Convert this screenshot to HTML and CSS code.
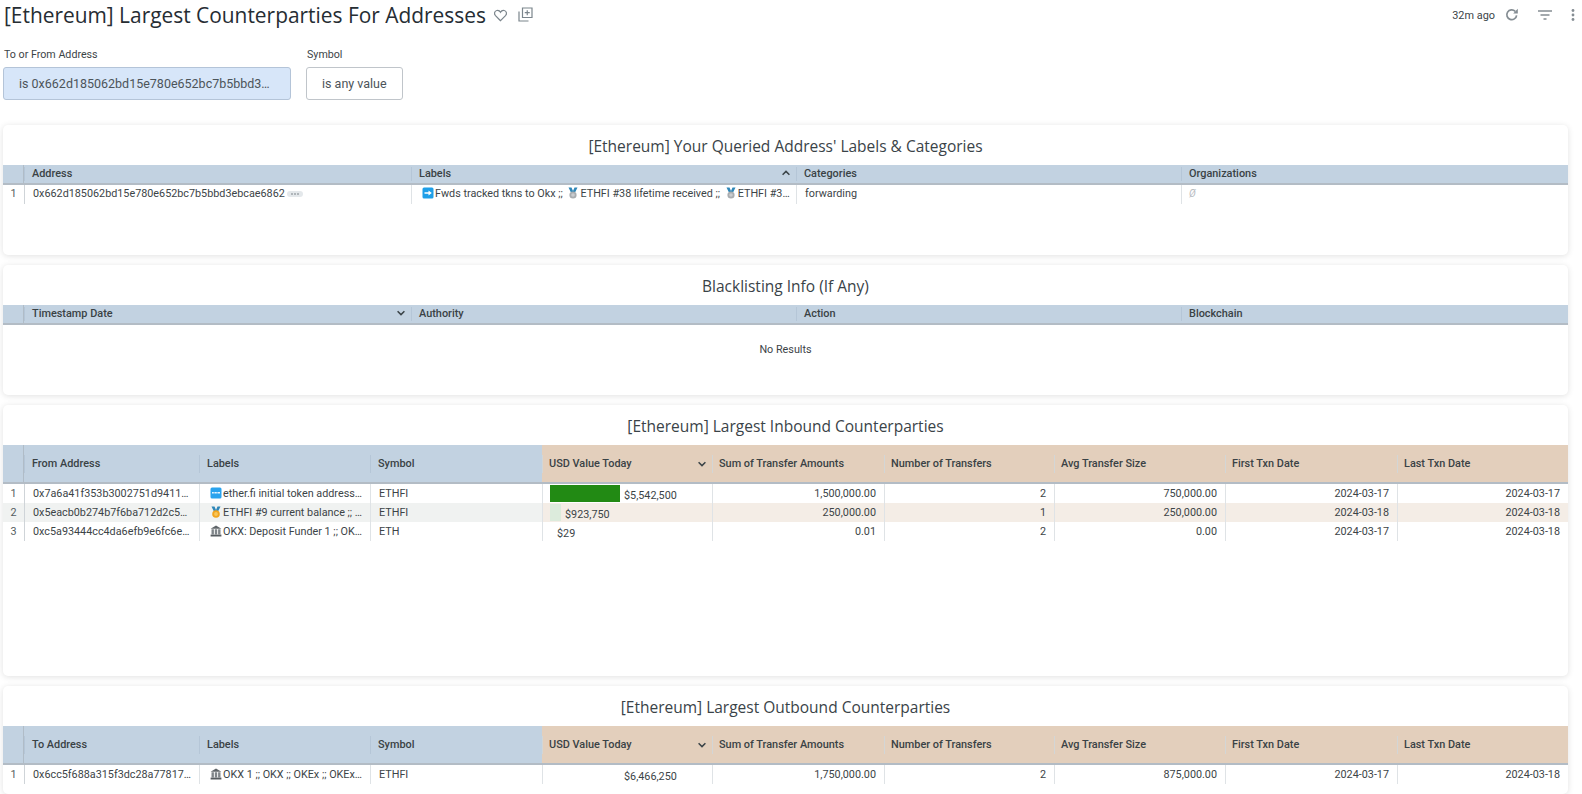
FILE: index.html
```html
<!DOCTYPE html>
<html lang="en">
<head>
<meta charset="utf-8">
<title>[Ethereum] Largest Counterparties For Addresses</title>
<link rel="stylesheet" href="styles.css">
</head>
<body>
<svg class="defs" width="0" height="0" aria-hidden="true">
  <symbol id="i-arrow" viewBox="0 0 12 12">
    <rect x="0.5" y="0.5" width="11" height="11" rx="1.5" fill="#1f9fe8"/>
    <path d="M2.5 5.2h4V3.4L9.8 6 6.5 8.6V6.8h-4z" fill="#fff"/>
  </symbol>
  <symbol id="i-silver" viewBox="0 0 12 12">
    <path d="M1.5 0.5h3L6 4 7.5 0.5h3L7.8 6H4.2z" fill="#2f87b8"/>
    <circle cx="6" cy="8" r="3.6" fill="#a9adb0"/>
    <circle cx="6" cy="8" r="1.8" fill="#c9cccf"/>
  </symbol>
  <symbol id="i-gold" viewBox="0 0 12 12">
    <path d="M1.5 0.5h3L6 4 7.500 0.5h3L7.800 6H4.200z" fill="#2f87b8"/>
    <circle cx="6" cy="8" r="3.800" fill="#f2a51f"/>
    <circle cx="6" cy="8" r="1.900" fill="#f8c65a"/>
  </symbol>
  <symbol id="i-bank" viewBox="0 0 12 12">
    <path d="M6 0.600 11.400 3.800H0.600z" fill="#5f6569"/>
    <path d="M1.500 4.200h2.400v5.400H1.500zM4.800 4.200h2.400v5.400H4.800zM8.100 4.200h2.400v5.400H8.100z" fill="#7f8589"/>
    <path d="M0.600 9.600h10.800v1.900H0.600z" fill="#565c60"/>
  </symbol>
  <symbol id="i-etherfi" viewBox="0 0 12 12">
    <rect x="0.500" y="0.500" width="11" height="11" rx="1.500" fill="#29a3ee"/>
    <path d="M2 5h1.800v1.600H2zM4.400 5h2.400v1.600H4.400zM7.400 5h2.600v1.600H7.400z" fill="#e6f5ff"/>
  </symbol>
  <symbol id="i-down" viewBox="0 0 10 10">
    <path d="M1.600 3.200 5 6.600l3.400-3.400" fill="none" stroke="#3a4347" stroke-width="1.500"/>
  </symbol>
  <symbol id="i-up" viewBox="0 0 10 10">
    <path d="M1.600 6.800 5 3.400l3.400 3.400" fill="none" stroke="#3a4347" stroke-width="1.500"/>
  </symbol>
</svg>

<header class="topbar">
  <div class="title-group">
    <h1 class="page-title">[Ethereum] Largest Counterparties For Addresses</h1>
    <svg class="heart" viewBox="0 0 16 14" width="15" height="13"><path d="M8 12.600 2.600 7.200C.8 5.300 1.400 2.200 4 1.600 5.600 1.300 7.200 2 8 3.500 8.800 2 10.400 1.300 12 1.600c2.600.6 3.200 3.700 1.400 5.600z" fill="none" stroke="#7b858c" stroke-width="1.300"/></svg>
    <svg class="addboard" viewBox="0 0 15 15" width="15" height="15"><path d="M4.500 1h9.500v9.500H4.500zM1 4.500V14h9.500" fill="none" stroke="#7b858c" stroke-width="1.200"/><path d="M9.250 3.200v5M6.750 5.700h5" fill="none" stroke="#7b858c" stroke-width="1.200"/></svg>
  </div>
  <div class="tools">
    <span class="ago">32m ago</span>
    <svg class="refresh" viewBox="0 0 14 14" width="14" height="14"><path d="M11.600 7.300A4.900 4.900 0 1 1 10.200 3.300" fill="none" stroke="#858d93" stroke-width="1.700"/><path d="M12.800 .8v4.600H8.200z" fill="#858d93"/></svg>
    <svg class="filter" viewBox="0 0 14 10" width="14" height="10"><path d="M0 1h14M2.500 5h9M5.500 9h3" fill="none" stroke="#858d93" stroke-width="1.400"/></svg>
    <svg class="dots" viewBox="0 0 4 12" width="4" height="12"><circle cx="2" cy="1.500" r="1.400" fill="#858d93"/><circle cx="2" cy="6" r="1.400" fill="#858d93"/><circle cx="2" cy="10.500" r="1.400" fill="#858d93"/></svg>
  </div>
</header>

<section class="filters">
  <div class="filter-item">
    <label class="filter-label">To or From Address</label>
    <div class="chip chip-active">is 0x662d185062bd15e780e652bc7b5bbd3…</div>
  </div>
  <div class="filter-item">
    <label class="filter-label">Symbol</label>
    <div class="chip">is any value</div>
  </div>
</section>

<main class="cards">
  <article class="card card-short">
    <h2 class="card-title">[Ethereum] Your Queried Address' Labels &amp; Categories</h2>
    <div class="row cols-4 head head-thin">
      <div class="th num"></div>
      <div class="th">Address</div>
      <div class="th">Labels<svg class="sort"><use href="#i-up"/></svg></div>
      <div class="th">Categories</div>
      <div class="th">Organizations</div>
    </div>
    <div class="row cols-4">
      <div class="td num">1</div>
      <div class="td">0x662d185062bd15e780e652bc7b5bbd3ebcae6862<svg class="more" viewBox="0 0 16 6"><rect width="16" height="6" rx="3" fill="#e4e8eb"/><circle cx="5" cy="3" r=".8" fill="#6d767b"/><circle cx="8" cy="3" r=".8" fill="#6d767b"/><circle cx="11" cy="3" r=".8" fill="#6d767b"/></svg></div>
      <div class="td td-icon"><svg class="emoji"><use href="#i-arrow"/></svg>Fwds tracked tkns to Okx ;; <svg class="emoji emoji-mid"><use href="#i-silver"/></svg>ETHFI #38 lifetime received ;; <svg class="emoji emoji-mid"><use href="#i-silver"/></svg>ETHFI #3…</div>
      <div class="td">forwarding</div>
      <div class="td null">Ø</div>
    </div>
  </article>

  <article class="card card-short">
    <h2 class="card-title">Blacklisting Info (If Any)</h2>
    <div class="row cols-4 head head-thin">
      <div class="th num"></div>
      <div class="th">Timestamp Date<svg class="sort"><use href="#i-down"/></svg></div>
      <div class="th">Authority</div>
      <div class="th">Action</div>
      <div class="th">Blockchain</div>
    </div>
    <div class="no-results">No Results</div>
  </article>

  <article class="card card-tall">
    <h2 class="card-title">[Ethereum] Largest Inbound Counterparties</h2>
    <div class="row cols-9 head">
      <div class="th num"></div>
      <div class="th">From Address</div>
      <div class="th">Labels</div>
      <div class="th">Symbol</div>
      <div class="th tan">USD Value Today<svg class="sort"><use href="#i-down"/></svg></div>
      <div class="th tan">Sum of Transfer Amounts</div>
      <div class="th tan">Number of Transfers</div>
      <div class="th tan">Avg Transfer Size</div>
      <div class="th tan">First Txn Date</div>
      <div class="th tan">Last Txn Date</div>
    </div>
    <div class="row cols-9">
      <div class="td num">1</div>
      <div class="td">0x7a6a41f353b3002751d9411…</div>
      <div class="td td-icon"><svg class="emoji"><use href="#i-etherfi"/></svg>ether.fi initial token address…</div>
      <div class="td">ETHFI</div>
      <div class="td bar-cell"><span class="bar" style="width:70px"></span><span class="bar-text">$5,542,500</span></div>
      <div class="td right">1,500,000.00</div>
      <div class="td right">2</div>
      <div class="td right">750,000.00</div>
      <div class="td right">2024-03-17</div>
      <div class="td right">2024-03-17</div>
    </div>
    <div class="row cols-9 alt">
      <div class="td num">2</div>
      <div class="td">0x5eacb0b274b7f6ba712d2c5…</div>
      <div class="td td-icon"><svg class="emoji"><use href="#i-gold"/></svg>ETHFI #9 current balance ;; …</div>
      <div class="td">ETHFI</div>
      <div class="td bar-cell"><span class="bar bar-pale" style="width:11px"></span><span class="bar-text">$923,750</span></div>
      <div class="td right">250,000.00</div>
      <div class="td right">1</div>
      <div class="td right">250,000.00</div>
      <div class="td right">2024-03-18</div>
      <div class="td right">2024-03-18</div>
    </div>
    <div class="row cols-9">
      <div class="td num">3</div>
      <div class="td">0xc5a93444cc4da6efb9e6fc6e…</div>
      <div class="td td-icon"><svg class="emoji"><use href="#i-bank"/></svg>OKX: Deposit Funder 1 ;; OK…</div>
      <div class="td">ETH</div>
      <div class="td bar-cell"><span class="bar bar-none" style="width:3px"></span><span class="bar-text">$29</span></div>
      <div class="td right">0.01</div>
      <div class="td right">2</div>
      <div class="td right">0.00</div>
      <div class="td right">2024-03-17</div>
      <div class="td right">2024-03-18</div>
    </div>
  </article>

  <article class="card card-last">
    <h2 class="card-title">[Ethereum] Largest Outbound Counterparties</h2>
    <div class="row cols-9 head">
      <div class="th num"></div>
      <div class="th">To Address</div>
      <div class="th">Labels</div>
      <div class="th">Symbol</div>
      <div class="th tan">USD Value Today<svg class="sort"><use href="#i-down"/></svg></div>
      <div class="th tan">Sum of Transfer Amounts</div>
      <div class="th tan">Number of Transfers</div>
      <div class="th tan">Avg Transfer Size</div>
      <div class="th tan">First Txn Date</div>
      <div class="th tan">Last Txn Date</div>
    </div>
    <div class="row cols-9">
      <div class="td num">1</div>
      <div class="td">0x6cc5f688a315f3dc28a77817…</div>
      <div class="td td-icon"><svg class="emoji"><use href="#i-bank"/></svg>OKX 1 ;; OKX ;; OKEx ;; OKEx…</div>
      <div class="td">ETHFI</div>
      <div class="td bar-cell"><span class="bar bar-none" style="width:70px"></span><span class="bar-text">$6,466,250</span></div>
      <div class="td right">1,750,000.00</div>
      <div class="td right">2</div>
      <div class="td right">875,000.00</div>
      <div class="td right">2024-03-17</div>
      <div class="td right">2024-03-18</div>
    </div>
  </article>
</main>
</body>
</html>
```
FILE: styles.css
```css
* { box-sizing: border-box; }

html, body {
  margin: 0;
  height: 100%;
  overflow: hidden;
  background: #fff;
}

body {
  display: flex;
  flex-direction: column;
  font-family: Roboto, "Liberation Sans", sans-serif;
  font-size: 10.8px;
  color: #3c4447;
  padding: 0 14px 0 3px;
}

.defs { position: absolute; }

.topbar {
  flex: none;
  height: 30px;
  display: flex;
  justify-content: space-between;
  align-items: center;
}

.title-group { display: flex; align-items: center; padding-left: 1px; }

.page-title {
  margin: 0;
  font-family: "Open Sans", sans-serif;
  font-weight: 400;
  font-size: 20.9px;
  line-height: 30px;
  color: #262d33;
  white-space: nowrap;
}

.heart { margin-left: 7px; }
.addboard { margin-left: 10px; margin-top: -2px; }

.tools {
  display: flex;
  align-items: center;
  margin-right: -7px;
  color: #3c4447;
}

.ago { font-size: 10.9px; }
.refresh { margin-left: 10px; }
.filter { margin-left: 19px; }
.dots { margin-left: 19px; }

.filters {
  flex: none;
  display: flex;
  gap: 15px;
  margin-top: 17px;
}

.filter-item { display: flex; flex-direction: column; }

.filter-label {
  font-size: 10.7px;
  line-height: 14px;
  padding: 1px 0 0 1px;
  margin-bottom: 5px;
}

.chip {
  height: 33px;
  padding: 0 15px;
  display: flex;
  align-items: center;
  border: 1px solid #c0c5ca;
  border-radius: 3px;
  font-size: 12.5px;
  color: #4c5459;
  background: #fff;
  white-space: nowrap;
}

.chip-active {
  width: 288px;
  background: #d7e6f9;
  border-color: #b4c4d8;
}

.cards {
  flex: 1;
  min-height: 0;
  display: flex;
  flex-direction: column;
  gap: 10px;
  margin-top: 25px;
}

.card {
  background: #fff;
  border-radius: 5px;
  box-shadow: 0 1px 6px rgba(0, 0, 0, .12);
  flex: none;
}

.card-short { height: 130px; }
.card-tall { height: 271px; }
.card-last { flex: 1; min-height: 0; }

.card-title {
  margin: 0;
  height: 40px;
  padding-top: 1px;
  display: flex;
  align-items: center;
  justify-content: center;
  font-family: "Open Sans", sans-serif;
  font-weight: 400;
  font-size: 15.5px;
  color: #3a4348;
}

.row { display: grid; height: 19px; }
.cols-4 { grid-template-columns: 21px 387px 385px 385px 387px; }
.cols-9 { grid-template-columns: 21px 175px 171px 172px 170px 172px 170px 171px 172px 1fr; }

.head {
  height: 39px;
  background: #c2d2e1;
  border-bottom: 2px solid #b3bcc5;
}

.head-thin { height: 20px; }
.head-thin .th { padding-bottom: 2px; }

.th {
  position: relative;
  display: flex;
  align-items: center;
  justify-content: space-between;
  padding: 0 5px 0 8px;
  font-size: 10.9px;
  font-weight: 500;
  color: #3a4245;
  white-space: nowrap;
}

.th::before {
  content: "";
  position: absolute;
  left: 0;
  top: 50%;
  height: 18px;
  margin-top: -9px;
  border-left: 1px solid #b5c6d7;
}

.head-thin .th::before { height: 14px; margin-top: -7px; }
.th.num::before { display: none; }
.th.num { border-right: 1px solid #b0bcc7; }
.th.tan { background: #e3cfbc; padding-left: 7px; }
.th.tan::before { border-left-color: #d3d6d6; }

.sort { width: 10px; height: 10px; flex: none; }

.td {
  padding: 0 3px 0 8px;
  line-height: 18px;
  border-left: 1px solid #dfe3e6;
  white-space: nowrap;
  overflow: hidden;
  text-overflow: ellipsis;
}

.cols-9 .td { line-height: 20px; }

.td.num {
  border-left: 0;
  padding: 0;
  text-align: center;
  color: #555d61;
}

.row .td.num + .td { border-left: 1px solid #cfd4d8; }

.td-icon { padding-left: 10px; }

.emoji {
  width: 12px;
  height: 12px;
  vertical-align: -2px;
  margin-right: 1px;
}

.emoji-mid { margin-left: 2px; }

.right { text-align: right; padding-right: 8px; }

.null { color: #b8bcbf; padding-left: 7px; font-size: 10px; font-style: italic; }

.more {
  width: 16px;
  height: 6px;
  margin-left: 2px;
  vertical-align: 0;
}

.alt .td { background: #f0f2f1; }
.alt .td:nth-child(n+5) { background: #f4ede6; }

.bar-cell {
  display: flex;
  align-items: stretch;
  padding: 1px 0 1px 7px;
}

.bar { flex: none; background: #228a14; }
.bar-pale { background: #dcebdc; }
.bar-none { background: transparent; }

.cols-9 .bar-text { margin-left: 4px; padding-top: 2px; line-height: 18px; }

.no-results {
  display: flex;
  justify-content: center;
  padding-top: 18px;
  line-height: 14px;
}
```
